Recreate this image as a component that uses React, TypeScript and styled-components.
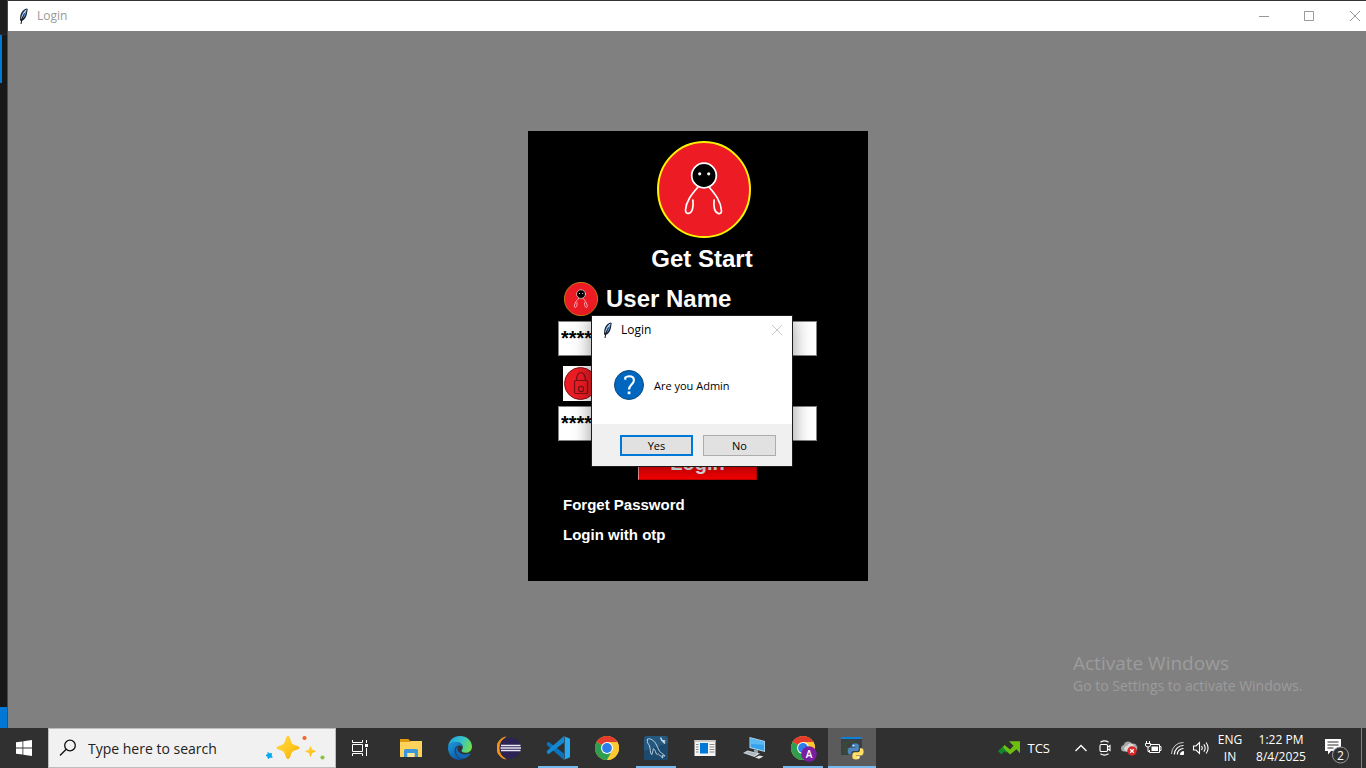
import React from "react";
import styled, { createGlobalStyle } from "styled-components";

const ui = `"Open Sans", "Noto Sans", sans-serif`;
const arial = `"Liberation Sans", Arial, sans-serif`;

const GlobalStyle = createGlobalStyle`
  *, *::before, *::after { box-sizing: border-box; }
  body { margin: 0; font-family: ${ui}; background: #808080; }
  button { font-family: inherit; cursor: pointer; }
  svg { display: block; flex: none; }
`;

/* ---------- Page frame ---------- */

const Screen = styled.div`
  display: flex;
  flex-direction: column;
  min-height: 100vh;
  overflow: hidden;
`;

const Desktop = styled.main`
  display: flex;
  flex: 1;
`;

const EditorEdge = styled.aside`
  display: flex;
  flex-direction: column;
  flex: none;
  width: 8px;
  background: #181818;
  border-right: 1px solid #4a4a4a;
`;

const EdgeTitle = styled.div`
  height: 35px;
  background: #1f1f1f;
  border-bottom: 1px solid #2b2b2b;
`;

const EdgeMarker = styled.div`
  width: 2px;
  height: 48px;
  background: #0078d4;
`;

const EdgeStatus = styled.div`
  height: 21px;
  margin-top: auto;
  background: #0078d4;
`;

const AppWindow = styled.section`
  display: flex;
  flex-direction: column;
  flex: 1;
  min-width: 0;
  border-top: 1px solid #333;
  background: #808080;
`;

const TitleBar = styled.header`
  display: flex;
  align-items: center;
  height: 30px;
  padding-left: 10px;
  background: #fff;
  overflow: hidden;
`;

const TitleText = styled.h1<{ $active?: boolean }>`
  flex: 1;
  margin: 0 0 0 7px;
  font-size: 12px;
  line-height: 16px;
  font-weight: 400;
  color: ${(p) => (p.$active ? "#000" : "#999")};
`;

const WindowControls = styled.div`
  display: flex;
  margin-right: -12px;
`;

const ControlButton = styled.button<{ $tone: string; $width: number }>`
  display: grid;
  place-items: center;
  width: ${(p) => p.$width}px;
  height: 28px;
  padding: 0;
  border: 0;
  background: none;
  color: ${(p) => p.$tone};
`;

const Canvas = styled.div`
  display: flex;
  flex-direction: column;
  flex: 1;
  align-items: center;
  padding: 100px 0 32px 22px;
`;

/* ---------- Login card ---------- */

const Card = styled.form`
  position: relative;
  width: 340px;
  min-height: 450px;
  padding: 10px 30px 30px;
  background: #000;
  color: #fff;
  font-family: ${arial};
  font-weight: 700;
`;

const CardHead = styled.div`
  display: flex;
  flex-direction: column;
  align-items: center;
  padding-left: 11px;
`;

const Heading = styled.h2`
  margin: 7px 0 0;
  padding-right: 3px;
  font-size: 24px;
  line-height: 28px;
`;

const FieldLabel = styled.label`
  display: flex;
  align-items: center;
  gap: 8px;
  height: 35px;
  margin: 10px 0 5px;
  padding-left: 5px;
  font-size: 24px;
  line-height: 28px;
`;

const UserLabel = styled(FieldLabel)`
  margin-top: 8px;
  padding-left: 6px;
`;

const Entry = styled.input`
  display: block;
  width: 259px;
  height: 35px;
  padding: 0 2px;
  border: 1px solid #828282;
  border-radius: 0;
  background: #fff;
  color: #000;
  font: 700 20px ${arial};
`;

const LoginButton = styled.button`
  display: block;
  width: 119px;
  height: 34px;
  margin: 5px 0 0 80px;
  padding: 0;
  border: 1px solid #c80000;
  border-left-color: #ffa0a0;
  background: #ff0000;
  color: #f8f8f8;
  font-size: 20px;
  line-height: 24px;
  font-weight: 700;
`;

const CardLinks = styled.nav`
  display: flex;
  flex-direction: column;
  align-items: flex-start;
  gap: 10px;
  margin-top: 15px;
  padding-left: 5px;
`;

const CardLink = styled.a`
  color: #fff;
  font-size: 15px;
  line-height: 20px;
  text-decoration: none;
`;

/* ---------- Message box ---------- */

const Dialog = styled.div`
  position: absolute;
  top: 184px;
  left: 63px;
  width: 202px;
  border: 1px solid #1c1c1c;
  background: #fff;
  color: #000;
  font-family: ${ui};
  font-weight: 400;
  box-shadow: 0 3px 18px rgba(0, 0, 0, 0.42);
`;

const DialogTitle = styled.div`
  display: flex;
  align-items: center;
  height: 28px;
  padding-left: 10px;
`;

const DialogBody = styled.div`
  display: flex;
  align-items: center;
  gap: 10px;
  height: 80px;
  padding: 2px 0 0 22px;
  font-size: 11px;
  line-height: 18px;
`;

const DialogMessage = styled.p`
  margin: 0;
  padding-top: 2px;
`;

const DialogFooter = styled.div`
  display: flex;
  justify-content: flex-end;
  gap: 10px;
  padding: 11px 16px 10px;
  background: #f0f0f0;
`;

const DialogButton = styled.button<{ $primary?: boolean }>`
  width: 73px;
  height: 21px;
  padding: 0;
  border: ${(p) => (p.$primary ? "2px solid #0078d7" : "1px solid #adadad")};
  background: #e1e1e1;
  color: #000;
  font-size: 11px;
  line-height: 16px;
`;

/* ---------- Watermark ---------- */

const Watermark = styled.div`
  align-self: flex-end;
  width: 293px;
  margin-top: auto;
  color: #9c9c9c;
`;

const WatermarkTitle = styled.p`
  margin: 0;
  font-size: 19px;
  line-height: 26px;
`;

const WatermarkText = styled.p`
  margin: 0;
  font-size: 14px;
  line-height: 20px;
`;

/* ---------- Taskbar ---------- */

const Taskbar = styled.footer`
  display: flex;
  flex: none;
  height: 40px;
  background: #303030;
  color: #fff;
`;

const TaskButton = styled.button<{ $active?: boolean }>`
  display: grid;
  place-items: center;
  flex: none;
  width: 48px;
  height: 40px;
  padding: 0;
  border: 0;
  background: ${(p) => (p.$active ? "#5b5b5b" : "none")};
  color: #fff;
`;

const AppButton = styled(TaskButton)<{ $running?: boolean }>`
  background-image: ${(p) =>
    p.$running ? "linear-gradient(#76b9ed, #76b9ed)" : "none"};
  background-repeat: no-repeat;
  background-position: bottom center;
  background-size: ${(p) => (p.$active ? "100%" : "40px")} 2px;
`;

const SearchBox = styled.label`
  display: flex;
  align-items: center;
  flex: none;
  width: 288px;
  padding: 0 9px 0 10px;
  border: 1px solid #bdbdbd;
  background: #f1f1f1;
  color: #111;
`;

const SearchInput = styled.input`
  flex: 1;
  min-width: 0;
  margin: 0 0 0 11px;
  padding: 0;
  border: 0;
  outline: 0;
  background: none;
  font: 400 14px ${ui};
  &::placeholder {
    color: #222;
    opacity: 1;
  }
`;

const AppList = styled.nav`
  display: flex;
  gap: 1px;
  margin-left: 3px;
`;

const Tray = styled.div`
  display: flex;
  align-items: stretch;
  margin-left: auto;
  font-size: 12px;
  line-height: 17px;
`;

const TrayButton = styled.button<{ $width: number }>`
  display: grid;
  place-items: center;
  align-content: center;
  width: ${(p) => p.$width}px;
  padding: 0;
  border: 0;
  background: none;
  color: #fff;
  font-size: 12px;
  line-height: 17px;
  white-space: nowrap;
`;

const NoticeButton = styled(TrayButton)`
  padding-top: 5px;
`;

const StockButton = styled.button`
  display: flex;
  align-items: center;
  gap: 8px;
  margin-right: 19px;
  padding: 0;
  border: 0;
  background: none;
  color: #fff;
  font-size: 13px;
`;

const ShowDesktop = styled.button`
  width: 5px;
  padding: 0;
  border: 0;
  border-left: 1px solid #808080;
  background: none;
`;

/* ---------- Drawings ---------- */

const Feather = () => (
  <svg width="12" height="16" viewBox="0 0 12 16">
    <path d="M8.500.5C5 1.500 2.500 5 2.200 9L2 12.500l1.500.5C6.500 12 8.500 9 9 5.500L9.700 1z" fill="#15202e" />
    <path d="M8.500 1.500C5.500 2.800 3.500 6 3.200 9.500l.5 2C6.200 10 7.800 7 8.200 4z" fill="#5c9be0" />
    <path d="M8.300 1.800C6.500 4 4.500 7 3.800 10.500" stroke="#d3e6fa" fill="none" />
    <path d="M6.500 5.500C5 8 3.600 11.500 3 16" stroke="#111" fill="none" />
  </svg>
);

const Cross = () => (
  <svg width="12" height="12" viewBox="0 0 12 12" stroke="currentColor" fill="none">
    <path d="M1 1l10 10M11 1L1 11" />
  </svg>
);

const Figure = ({ width, height, ring }: { width: number; height: number; ring: string }) => (
  <svg width={width} height={height} viewBox="0 0 94 97" preserveAspectRatio="none">
    <ellipse cx="47" cy="48.500" rx="46" ry="47.500" fill="#ed1c24" stroke={ring} strokeWidth="2" />
    <g fill="none" stroke="#fff" strokeWidth="1.700" strokeLinecap="round">
      <path d="M41 46C35 53 29 60 28.500 69c0 5 5.500 4.500 7-1 .8-3 .7-6 .4-9" />
      <path d="M52 46c6 7 12 14 12.500 24 0 4-5.500 3.500-7-2-.8-3-.7-6-.4-9" />
      <circle cx="47" cy="34.500" r="12.300" fill="#000" />
    </g>
    <g fill="#fff">
      <circle cx="42.700" cy="32.800" r="1.600" />
      <circle cx="51.700" cy="32.800" r="1.600" />
    </g>
  </svg>
);

const LockBadge = () => (
  <svg width="35" height="35" viewBox="0 0 35 35">
    <path d="M0 0h35v35H0z" fill="#fff" />
    <circle cx="17.500" cy="17.500" r="16" fill="#ed1c24" stroke="#7c1015" />
    <g fill="none" stroke="#7c1015" strokeWidth="1.200">
      <rect x="11.500" y="14.500" width="13" height="13" rx="1" />
      <path d="M13.500 14c0-4 1.800-7.500 4.500-7.500S22.500 10 22.500 14" />
      <circle cx="18" cy="23" r="2.600" />
    </g>
  </svg>
);

const QuestionIcon = () => (
  <svg width="30" height="30" viewBox="0 0 30 30">
    <circle cx="15" cy="15" r="14.500" fill="#0067c0" stroke="#0b4a80" />
    <path d="M11.300 9.800V7.500c1-.9 2.300-1.300 3.900-1.300 2.900 0 4.700 1.500 4.700 4 0 4.100-4.900 4.600-4.900 9.300" fill="none" stroke="#fff" strokeWidth="2.100" />
    <path d="M13.700 21.500h2.700v2.700h-2.700z" fill="#fff" />
  </svg>
);

const WindowsLogo = () => (
  <svg width="16" height="16" viewBox="0 0 16 16" fill="#fff">
    <path d="M0 2.300L6.500 1.400v6.200H0zM7.300 1.300L16 0v7.600H7.300zM0 8.400h6.500v6.200L0 13.700zM7.300 8.400H16V16l-8.700-1.300z" />
  </svg>
);

const SearchIcon = () => (
  <svg width="18" height="18" viewBox="0 0 18 18" fill="none" stroke="#111" strokeWidth="1.300">
    <circle cx="11" cy="6.500" r="5.300" />
    <path d="M7.200 10.300L1 16.500" />
  </svg>
);

const Sparkles = () => (
  <svg width="62" height="26" viewBox="0 0 62 26">
    <defs>
      <linearGradient id="gold" x1="0" y1="0" x2="1" y2="1">
        <stop offset="0" stopColor="#ffd84a" />
        <stop offset=".55" stopColor="#ffc81e" />
        <stop offset="1" stopColor="#eea60a" />
      </linearGradient>
    </defs>
    <path d="M24 1c1.500 0 2 2 2.800 4.500C27.800 9 29 9.500 32 10.500c2 .7 3.500 1 3.500 2.200s-1.500 1.500-3.500 2.200c-3 1-4 1.500-5.200 5-.8 2.500-1.300 4.100-2.800 4.100s-2-1.600-2.800-4.100c-1.200-3.500-2.200-4-5.200-5-2-.7-3.500-1-3.500-2.200s1.500-1.500 3.500-2.200c3-1 4.200-1.500 5.200-5C22 3 22.500 1 24 1z" fill="url(#gold)" />
    <path d="M46.500 11c.7 0 1 2.500 1.700 3.500s3.500 1 3.500 1.800-2.800 1-3.500 1.800-1 3.700-1.700 3.700-1-3-1.700-3.700-3.500-1-3.500-1.800 2.800-.8 3.500-1.800 1-3.500 1.700-3.500z" fill="url(#gold)" />
    <path d="M4 17.500l1.500 1.500 2-.5-.3 2 1 1.800-2.200-.2-1.500 1.600-.8-2.200L2 20.300l2.200-.8z" fill="#00a8f0" stroke="#00a8f0" strokeLinejoin="round" />
    <circle cx="40.500" cy="3" r="2.100" fill="#f2642a" />
    <circle cx="58.500" cy="22.500" r="2.100" fill="#8ac43f" />
  </svg>
);

const TaskViewIcon = () => (
  <svg width="18" height="16" viewBox="0 0 18 16" fill="none" stroke="#fff">
    <path d="M1.500 4.500h10v7h-10zM1.500 0v2.500h10V0M1.500 16v-2.500h10V16M15.500 0v3M15.500 8v8" />
    <path d="M14 4h3v3h-3z" fill="#fff" stroke="none" />
  </svg>
);

const ExplorerIcon = () => (
  <svg width="24" height="24" viewBox="0 0 24 24">
    <path d="M1 3h8.500l1.500 2H22v4H1z" fill="#dd9a0c" />
    <path d="M1 6h10l1-1h11v16H1z" fill="#ffd25c" />
    <path d="M5 21v-6.500q0-1.500 1.500-1.500h11q1.500 0 1.500 1.500V21h-3.500v-4h-7v4z" fill="#3c97d8" />
    <path d="M8.500 17h7v4h-7z" fill="#fde49a" />
  </svg>
);

const EdgeIcon = () => (
  <svg width="24" height="24" viewBox="0 0 24 24">
    <defs>
      <linearGradient id="edgeTop" x1="0" y1=".3" x2="1" y2=".6">
        <stop offset="0" stopColor="#1fa5dc" />
        <stop offset=".5" stopColor="#35c1ce" />
        <stop offset="1" stopColor="#70e04a" />
      </linearGradient>
      <linearGradient id="edgeLow" x1="0" y1="0" x2=".8" y2="1">
        <stop offset="0" stopColor="#1b9de2" />
        <stop offset="1" stopColor="#0b4f9c" />
      </linearGradient>
    </defs>
    <path d="M0 11C.5 4.500 5.500 0 12 0c7 0 12 5 12 10.500 0 4-3 6.300-6.300 6.300-2.700 0-4.200-1-4.200-2 0-.8 1.300-1.200 1.300-3.500C14.800 8 11.500 6 8 6 4 6 1 8.500 0 11z" fill="url(#edgeTop)" />
    <path d="M0 11.500C1 8 4 6 8 6c3.500 0 6.500 2 6.700 5-1.200-1.200-2.500-1.500-3.700-1.500C7.500 9.500 6 13 7 16.500c1.300 4.500 5.500 6.500 9.500 6C13 24.500 8 24.600 4.300 21.500 1.300 19 0 15.500 0 11.500z" fill="url(#edgeLow)" />
    <path d="M11 9.500C8.500 10.300 7 13 7.800 16.500c1 4 4.700 6.500 8.700 6 2.500-.8 4.800-2.500 6-4.700.3-.6-.2-.9-.7-.6-4.800 2.400-12.300.5-12.300-4.700 0-1.500.6-2.400 1.500-3z" fill="#1467b5" />
  </svg>
);

const EclipseIcon = () => (
  <svg width="24" height="24" viewBox="0 0 24 24">
    <path d="M8.500 1A11.300 11.300 0 0 0 8.500 23A12.500 12.500 0 0 1 8.500 1z" fill="#f7941e" stroke="#f7941e" />
    <circle cx="13.500" cy="12" r="10.500" fill="#2c2255" />
    <path d="M4 9.500h19.500M3.500 12h20.500M4 14.500h19.500" stroke="#e9e7f3" strokeWidth="1.500" />
  </svg>
);

const CodeIcon = () => (
  <svg width="24" height="24" viewBox="0 0 24 24">
    <path d="M.8 7.200L2.600 5.800 18 17.500V24L.8 9z" fill="#0b72bb" />
    <path d="M.8 16.800l1.800 1.400L18 6.500V0L.8 15z" fill="#1489cf" />
    <path d="M17.500 0L24 2.800v18.400L17.500 24q1.200-.3 1.200-1.800V1.800Q18.700.300 17.500 0z" fill="#29a9f0" />
  </svg>
);

const ChromeMark = () => (
  <>
    <circle cx="12" cy="12" r="12" fill="#fcc934" />
    <path d="M12 12L1.600 6A12 12 0 0 1 22.400 6z" fill="#e33b2e" />
    <path d="M1.600 6A12 12 0 0 0 12 24l5.200-9L12 12z" fill="#2f9e4f" />
    <path d="M12 6h10.400A12 12 0 0 1 12 24l5.200-9z" fill="#fcc934" />
    <circle cx="12" cy="12" r="6" fill="#fff" />
    <circle cx="12" cy="12" r="4.900" fill="#2b7de9" />
  </>
);

const ChromeIcon = () => (
  <svg width="24" height="24" viewBox="0 0 24 24">
    <ChromeMark />
  </svg>
);

const ChromeProfileIcon = () => (
  <svg width="28" height="28" viewBox="0 0 28 28">
    <g transform="translate(2 2)">
      <ChromeMark />
    </g>
    <circle cx="20" cy="20" r="7.800" fill="#7b1fa2" />
    <text x="20" y="23.500" fill="#fff" fontSize="10" fontFamily="Open Sans" fontWeight="600" textAnchor="middle">A</text>
  </svg>
);

const MysqlIcon = () => (
  <svg width="24" height="24" viewBox="0 0 24 24">
    <rect width="24" height="24" rx="2.500" fill="#24587f" />
    <path d="M0 15l24-8v14.500q0 2.500-2.500 2.500h-19Q0 24 0 21.500z" fill="#1c4a6e" />
    <path d="M3.500 3c3-.8 6 1.200 8 4.200 2.300 3.500 3 8 6 10 1.700 1 2.800 1.500 3.500 2.800l-3-.4 1 2.400c-2-.8-3-2.800-4.500-4-1.300 1-2 .5-2.500-1-.8-2-1.200-3.600-2.600-4.400-.6 2-.9 4.500-1.700 6C5.500 16.500 6.800 13 5.500 10 4.700 8 2.500 6.500 3.500 3z" fill="none" stroke="#bdd3e3" />
    <path d="M16.500 1.500l1.500 3 3.200.500M18 4.500l3 3" fill="none" stroke="#c9dbe8" strokeWidth="1.500" />
  </svg>
);

const WindowAppIcon = () => (
  <svg width="24" height="24" viewBox="0 0 24 24">
    <path d="M1.500 4h21v16h-21z" fill="#f4f4f4" />
    <path d="M1.500 4h21v2h-21z" fill="#c9c9c9" />
    <path d="M7 7h8v10.500H7z" fill="#0078d7" />
    <path d="M3 8.500h2.500M3 11h2.500M3 13.500h2.500M3 16h2.500M16.500 8.500h5M16.500 11h5M16.500 13.500h5M16.500 16h5" stroke="#8d8d8d" />
  </svg>
);

const ComputerIcon = () => (
  <svg width="24" height="24" viewBox="0 0 24 24">
    <path d="M7.500 1L23 5v11L7.500 12z" fill="#b9d9ec" />
    <path d="M8.500 2.300L22.200 5.800v9.100L8.500 11.300z" fill="#35a4ec" />
    <path d="M8.500 2.300L22.200 5.800v3L8.500 8z" fill="#5cb9f4" />
    <path d="M12 13.200l4 1v3l-4-1z" fill="#8fa3af" />
    <path d="M1 17l4.500-2.500L18 17.500 12.500 21z" fill="#ccd3d8" />
    <path d="M3 17l3-1.500 9 2.200-3 1.700z" fill="#aeb8be" />
    <path d="M13 21.500l4.500-2 4 1-4.500 2.300z" fill="#e5e8ea" />
  </svg>
);

const PythonIcon = () => (
  <svg width="24" height="24" viewBox="0 0 24 24">
    <path d="M1 1h21v18H1z" fill="#3b4043" />
    <path d="M1 1h21v2H1z" fill="#0f80d8" />
    <path d="M3 7h6M3 10h4M3 13h5M3 16h4M11 6h4" stroke="#34592f" strokeWidth="1.200" />
    <path d="M15.500 7.500c3 0 3.300 1 3.300 2.200v3c0 1.600-1 2.300-2.300 2.300h-3c-1.500 0-2.200.8-2.200 2v1.500H9.700c-1.400 0-2-1.500-2-3.500s.8-3.500 2.300-3.500h5.500v-.6h-3.800V9.500c0-1.400 1.300-2 3.800-2z" fill="#4c88bd" />
    <path d="M16 23.500c-3 0-3.600-1-3.600-2.200v-2.800c0-1.600 1-2.300 2.300-2.300h3c1.500 0 2.200-.8 2.200-2v-1.900h1.600c1.400 0 2.100 1.500 2.100 3.500s-.9 3.700-2.400 3.700H16v.6h3.800v1.200c0 1.500-1.300 2.200-3.800 2.200z" fill="#ffdf66" />
    <circle cx="13.500" cy="9.500" r=".8" fill="#fff" />
    <circle cx="18.300" cy="21.600" r=".8" fill="#fff" />
  </svg>
);

const StockIcon = () => (
  <svg width="22" height="14" viewBox="0 0 22 14">
    <path d="M0 10L6.500 4l4.500 4.500-3 3.500-1.500-1.700L3.500 13.500z" fill="#128a2c" />
    <path d="M6.500 4L12 8.500 15.500 4.700 11 .300H22v12l-3.500-4-6.500 5.200L5 6.500z" fill="#6cc010" />
  </svg>
);

const ChevronUp = () => (
  <svg width="14" height="8" viewBox="0 0 14 8" fill="none" stroke="#fff" strokeWidth="1.300">
    <path d="M1.500 7L7 1.500 12.500 7" />
  </svg>
);

const MeetIcon = () => (
  <svg width="14" height="16" viewBox="0 0 14 16" fill="none" stroke="#fff" strokeWidth="1.100">
    <rect x="2" y="4.500" width="7.500" height="7" rx="1.200" />
    <path d="M9.500 7.300l2.500-1.800v5L9.500 8.700M2.500 2.200q4-2.700 8 0M2.500 13.800q4 2.700 8 0" />
  </svg>
);

const CloudIcon = () => (
  <svg width="18" height="16" viewBox="0 0 18 16">
    <path d="M4 11.500a3.300 3.300 0 0 1-.4-6.500A4.600 4.600 0 0 1 12 3.800a4 4 0 0 1 2.500 7.700z" fill="#a6a6a6" />
    <path d="M6 11.500a3 3 0 0 1 1-5.800 4 4 0 0 1 7.500 1.300l.5 4.500z" fill="#dadada" />
    <circle cx="12" cy="11" r="4.700" fill="#dc2626" />
    <path d="M10.200 9.200l3.600 3.600M13.800 9.200l-3.600 3.600" stroke="#fff" strokeWidth="1.300" />
  </svg>
);

const BatteryIcon = () => (
  <svg width="18" height="14" viewBox="0 0 18 14" fill="none" stroke="#fff">
    <path d="M7 3.500h8.500v8h-10V9M16 5.500h1v4h-1" />
    <path d="M7.500 5.500h6.500v4.500H7.500z" fill="#fff" stroke="none" />
    <path d="M2.500 0v2.500M5.500 0v2.500M1.500 2.500h5v1.500q0 2-2.500 2t-2.500-2zM4 6v4.500h1.500" />
  </svg>
);

const WifiIcon = () => (
  <svg width="14" height="14" viewBox="0 0 14 14" fill="none" stroke="#fff">
    <path d="M1.500 13A11.500 11.500 0 0 1 13.500 1.500" opacity=".75" />
    <path d="M4.300 13.500a9 9 0 0 1 9.200-9M7.300 13.500a6 6 0 0 1 6.200-6" strokeWidth="1.200" />
    <path d="M10.300 13.500a3.300 3.300 0 0 1 3.200-3v3z" fill="#fff" />
  </svg>
);

const SoundIcon = () => (
  <svg width="18" height="14" viewBox="0 0 18 14" fill="none" stroke="#fff" strokeWidth="1.100">
    <path d="M1.500 5H4l3.500-3.500v11L4 9H1.500zM9.500 5q1.500 2 0 4M11.800 3.300q2.800 3.700 0 7.400M14.100 1.500q4 5.500 0 11" />
  </svg>
);

const NoticeIcon = () => (
  <svg width="28" height="26" viewBox="0 0 28 26">
    <path d="M1 1h16v12H7l-3 3.500V13H1z" fill="#fff" />
    <path d="M3.500 4h11M3.500 7h11M3.500 10h6" stroke="#303030" />
    <circle cx="16.500" cy="17" r="8" fill="#303030" stroke="#999" />
    <text x="16.500" y="21.500" fill="#fff" fontSize="12" fontFamily="Open Sans" textAnchor="middle">2</text>
  </svg>
);

const apps = [
  { name: "File Explorer", Icon: ExplorerIcon },
  { name: "Microsoft Edge", Icon: EdgeIcon },
  { name: "Eclipse", Icon: EclipseIcon },
  { name: "Visual Studio Code", Icon: CodeIcon, running: true },
  { name: "Google Chrome", Icon: ChromeIcon },
  { name: "MySQL Workbench", Icon: MysqlIcon, running: true },
  { name: "Window", Icon: WindowAppIcon },
  { name: "Computer", Icon: ComputerIcon },
  { name: "Google Chrome profile", Icon: ChromeProfileIcon, running: true },
  { name: "Python", Icon: PythonIcon, running: true, active: true },
];

const trayIcons = [
  { name: "Show hidden icons", Icon: ChevronUp },
  { name: "Meet Now", Icon: MeetIcon },
  { name: "OneDrive", Icon: CloudIcon },
  { name: "Battery", Icon: BatteryIcon },
  { name: "Network", Icon: WifiIcon },
  { name: "Volume", Icon: SoundIcon },
];

const ConfirmDialog = () => (
  <Dialog role="dialog" aria-label="Login">
    <DialogTitle>
      <Feather />
      <TitleText as="h3" $active>Login</TitleText>
      <ControlButton type="button" aria-label="Close dialog" $tone="#c8c8c8" $width={30}>
        <Cross />
      </ControlButton>
    </DialogTitle>
    <DialogBody>
      <QuestionIcon />
      <DialogMessage>Are you Admin</DialogMessage>
    </DialogBody>
    <DialogFooter>
      <DialogButton type="button" $primary>Yes</DialogButton>
      <DialogButton type="button">No</DialogButton>
    </DialogFooter>
  </Dialog>
);

export default function App() {
  return (
    <Screen>
      <GlobalStyle />
      <Desktop>
        <EditorEdge>
          <EdgeTitle />
          <EdgeMarker />
          <EdgeStatus />
        </EditorEdge>
        <AppWindow>
          <TitleBar>
            <Feather />
            <TitleText>Login</TitleText>
            <WindowControls>
              <ControlButton aria-label="Minimize" $tone="#999" $width={45}>
                <svg width="10" height="10" viewBox="0 0 10 10" stroke="currentColor">
                  <path d="M0 5.500h10" />
                </svg>
              </ControlButton>
              <ControlButton aria-label="Maximize" $tone="#999" $width={46}>
                <svg width="10" height="10" viewBox="0 0 10 10" stroke="currentColor" fill="none">
                  <path d="M.5.500h9v9h-9z" />
                </svg>
              </ControlButton>
              <ControlButton aria-label="Close" $tone="#999" $width={46}>
                <Cross />
              </ControlButton>
            </WindowControls>
          </TitleBar>
          <Canvas>
            <Card onSubmit={(e) => e.preventDefault()}>
              <CardHead>
                <Figure width={94} height={97} ring="#fff200" />
                <Heading>Get Start</Heading>
              </CardHead>
              <UserLabel htmlFor="user">
                <Figure width={34} height={34} ring="#c8a415" />
                User Name
              </UserLabel>
              <Entry id="user" defaultValue="****" />
              <FieldLabel htmlFor="pass" aria-label="Password">
                <LockBadge />
              </FieldLabel>
              <Entry id="pass" defaultValue="****" />
              <LoginButton type="submit">Login</LoginButton>
              <CardLinks>
                <CardLink href="#forget">Forget Password</CardLink>
                <CardLink href="#otp">Login with otp</CardLink>
              </CardLinks>
              <ConfirmDialog />
            </Card>
            <Watermark>
              <WatermarkTitle>Activate Windows</WatermarkTitle>
              <WatermarkText>Go to Settings to activate Windows.</WatermarkText>
            </Watermark>
          </Canvas>
        </AppWindow>
      </Desktop>
      <Taskbar>
        <TaskButton aria-label="Start">
          <WindowsLogo />
        </TaskButton>
        <SearchBox>
          <SearchIcon />
          <SearchInput placeholder="Type here to search" aria-label="Search" />
          <Sparkles />
        </SearchBox>
        <TaskButton aria-label="Task View">
          <TaskViewIcon />
        </TaskButton>
        <AppList>
          {apps.map(({ name, Icon, running, active }) => (
            <AppButton key={name} aria-label={name} $running={running} $active={active}>
              <Icon />
            </AppButton>
          ))}
        </AppList>
        <Tray>
          <StockButton>
            <StockIcon />
            TCS
          </StockButton>
          {trayIcons.map(({ name, Icon }) => (
            <TrayButton key={name} aria-label={name} $width={24}>
              <Icon />
            </TrayButton>
          ))}
          <TrayButton $width={34}>
            <span>ENG</span>
            <span>IN</span>
          </TrayButton>
          <TrayButton $width={68}>
            <span>1:22 PM</span>
            <span>8/4/2025</span>
          </TrayButton>
          <NoticeButton aria-label="2 new notifications" $width={46}>
            <NoticeIcon />
          </NoticeButton>
          <ShowDesktop aria-label="Show desktop" />
        </Tray>
      </Taskbar>
    </Screen>
  );
}
